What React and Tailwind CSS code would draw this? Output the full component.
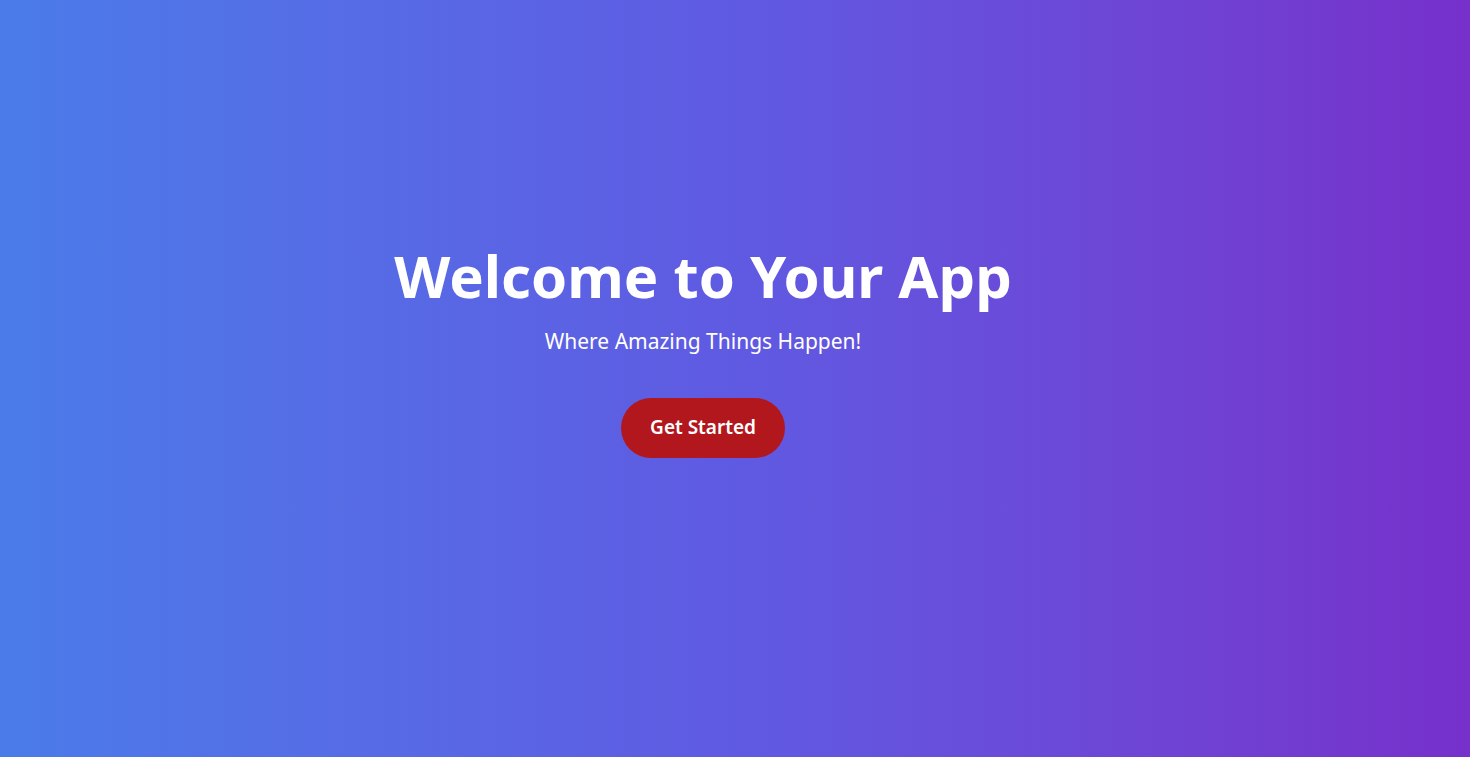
import React from 'react'

const App = () => {
  return (
    <div className="min-h-screen w-full flex items-center justify-center bg-gradient-to-r from-[#4a7be9] via-[#5f5ae2] to-[#7630cb] font-['Noto_Sans',sans-serif] text-white pr-[64px] pb-[60px]">
      <div className="flex flex-col items-center text-center">
        <h1 className="text-[58px] leading-[72px] font-bold">Welcome to Your App</h1>
        <p className="text-[21px] leading-[32px] mt-[13px]">Where Amazing Things Happen!</p>
        <button className="mt-[41px] h-[60px] w-[164px] rounded-full bg-[#b3171e] text-[19px] font-semibold text-white">
          Get Started
        </button>
      </div>
    </div>
  )
}

export default App
